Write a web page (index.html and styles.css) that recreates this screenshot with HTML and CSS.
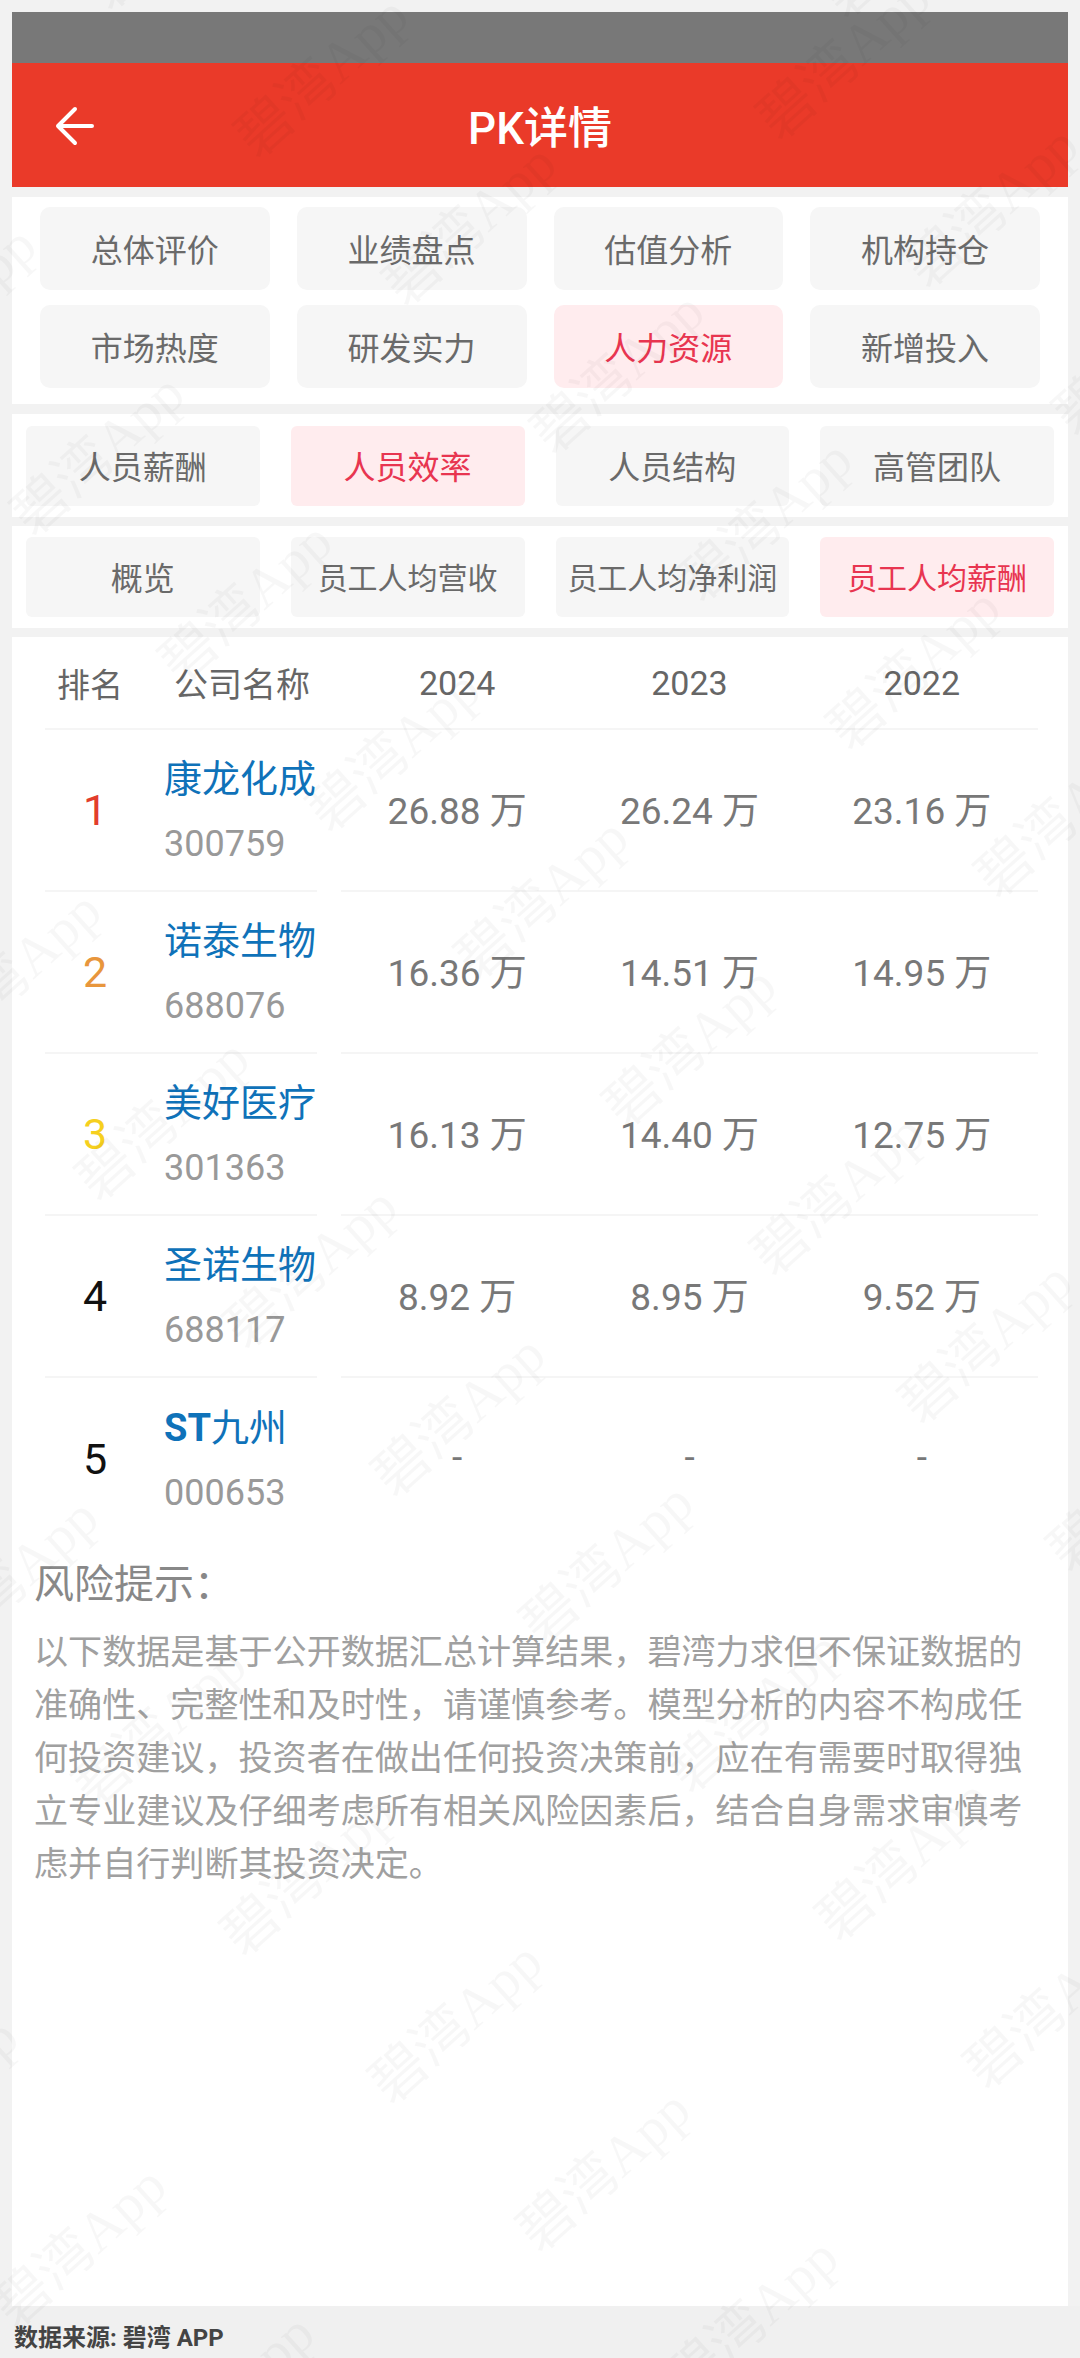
FILE: index.html
```html
<!DOCTYPE html>
<html lang="zh-CN">
<head>
  <meta charset="UTF-8">
  <meta name="viewport" content="width=device-width, initial-scale=1.0">
  <title>PK详情</title>
  <link rel="stylesheet" href="styles.css">
</head>
<body>

  <div class="frame">
    <div class="statusbar"></div>

    <div class="navbar">
      <svg class="back-icon" viewBox="0 0 40 40" width="40" height="40">
        <path d="M3 20H37M20 3L3 20L20 37" fill="none" stroke="#fff" stroke-width="4" stroke-linecap="round" stroke-linejoin="round"/>
      </svg>
      <div class="navbar-title">PK详情</div>
    </div>

    <div class="panel panel-main">
      <div class="tab">总体评价</div>
      <div class="tab">业绩盘点</div>
      <div class="tab">估值分析</div>
      <div class="tab">机构持仓</div>
      <div class="tab">市场热度</div>
      <div class="tab">研发实力</div>
      <div class="tab active">人力资源</div>
      <div class="tab">新增投入</div>
    </div>

    <div class="panel panel-sub">
      <div class="tab">人员薪酬</div>
      <div class="tab active">人员效率</div>
      <div class="tab">人员结构</div>
      <div class="tab">高管团队</div>
    </div>

    <div class="panel panel-sub panel-last">
      <div class="tab">概览</div>
      <div class="tab tab-small">员工人均营收</div>
      <div class="tab tab-small">员工人均净利润</div>
      <div class="tab tab-small active">员工人均薪酬</div>
    </div>

    <div class="content">
      <div class="rank-table">
        <div class="table-head">
          <div class="head-rank">排名</div>
          <div class="head-name">公司名称</div>
          <div class="cols">
            <div>2024</div>
            <div>2023</div>
            <div>2022</div>
          </div>
        </div>

        <div class="row">
          <div class="row-left">
            <div class="rank rank-1">1</div>
            <div class="company">
              <div class="company-name">康龙化成</div>
              <div class="company-code">300759</div>
            </div>
          </div>
          <div class="cols cols-line">
            <div>26.88 万</div>
            <div>26.24 万</div>
            <div>23.16 万</div>
          </div>
        </div>

        <div class="row">
          <div class="row-left">
            <div class="rank rank-2">2</div>
            <div class="company">
              <div class="company-name">诺泰生物</div>
              <div class="company-code">688076</div>
            </div>
          </div>
          <div class="cols cols-line">
            <div>16.36 万</div>
            <div>14.51 万</div>
            <div>14.95 万</div>
          </div>
        </div>

        <div class="row">
          <div class="row-left">
            <div class="rank rank-3">3</div>
            <div class="company">
              <div class="company-name">美好医疗</div>
              <div class="company-code">301363</div>
            </div>
          </div>
          <div class="cols cols-line">
            <div>16.13 万</div>
            <div>14.40 万</div>
            <div>12.75 万</div>
          </div>
        </div>

        <div class="row">
          <div class="row-left">
            <div class="rank">4</div>
            <div class="company">
              <div class="company-name">圣诺生物</div>
              <div class="company-code">688117</div>
            </div>
          </div>
          <div class="cols cols-line">
            <div>8.92 万</div>
            <div>8.95 万</div>
            <div>9.52 万</div>
          </div>
        </div>

        <div class="row row-last">
          <div class="row-left">
            <div class="rank">5</div>
            <div class="company">
              <div class="company-name"><strong>ST</strong>九州</div>
              <div class="company-code">000653</div>
            </div>
          </div>
          <div class="cols cols-line">
            <div>-</div>
            <div>-</div>
            <div>-</div>
          </div>
        </div>
      </div>

      <div class="risk">
        <div class="risk-title">风险提示：</div>
        <p class="risk-text">以下数据是基于公开数据汇总计算结果，碧湾力求但不保证数据的准确性、完整性和及时性，请谨慎参考。模型分析的内容不构成任何投资建议，投资者在做出任何投资决策前，应在有需要时取得独立专业建议及仔细考虑所有相关风险因素后，结合自身需求审慎考虑并自行判断其投资决定。</p>
      </div>
    </div>
  </div>

  <div class="footer">数据来源: 碧湾 APP</div>

  <!-- watermark lies over the whole page -->
  <svg class="watermark" viewBox="0 0 1080 2358" width="1080" height="2358">
    <g transform="translate(25 0)">
      <text transform="translate(820 20) rotate(-42)">碧湾App</text>
      <text transform="translate(754 142) rotate(-42)">碧湾App</text>
      <text transform="translate(902 290) rotate(-42)">碧湾App</text>
      <text transform="translate(1050 438) rotate(-42)">碧湾App</text>

      <text transform="translate(84 12) rotate(-42)">碧湾App</text>
      <text transform="translate(232 160) rotate(-42)">碧湾App</text>
      <text transform="translate(380 308) rotate(-42)">碧湾App</text>
      <text transform="translate(528 456) rotate(-42)">碧湾App</text>
      <text transform="translate(676 604) rotate(-42)">碧湾App</text>
      <text transform="translate(824 752) rotate(-42)">碧湾App</text>
      <text transform="translate(972 900) rotate(-42)">碧湾App</text>

      <text transform="translate(-140 390) rotate(-42)">碧湾App</text>
      <text transform="translate(8 538) rotate(-42)">碧湾App</text>
      <text transform="translate(156 686) rotate(-42)">碧湾App</text>
      <text transform="translate(304 834) rotate(-42)">碧湾App</text>
      <text transform="translate(452 982) rotate(-42)">碧湾App</text>
      <text transform="translate(600 1130) rotate(-42)">碧湾App</text>
      <text transform="translate(748 1278) rotate(-42)">碧湾App</text>
      <text transform="translate(896 1426) rotate(-42)">碧湾App</text>
      <text transform="translate(1044 1574) rotate(-42)">碧湾App</text>

      <text transform="translate(-75 1055) rotate(-42)">碧湾App</text>
      <text transform="translate(73 1203) rotate(-42)">碧湾App</text>
      <text transform="translate(221 1351) rotate(-42)">碧湾App</text>
      <text transform="translate(369 1499) rotate(-42)">碧湾App</text>
      <text transform="translate(517 1647) rotate(-42)">碧湾App</text>
      <text transform="translate(665 1795) rotate(-42)">碧湾App</text>
      <text transform="translate(813 1943) rotate(-42)">碧湾App</text>
      <text transform="translate(961 2091) rotate(-42)">碧湾App</text>

      <text transform="translate(-78 1662) rotate(-42)">碧湾App</text>
      <text transform="translate(70 1810) rotate(-42)">碧湾App</text>
      <text transform="translate(218 1958) rotate(-42)">碧湾App</text>
      <text transform="translate(366 2106) rotate(-42)">碧湾App</text>
      <text transform="translate(514 2254) rotate(-42)">碧湾App</text>
      <text transform="translate(662 2402) rotate(-42)">碧湾App</text>

      <text transform="translate(-158 2182) rotate(-42)">碧湾App</text>
      <text transform="translate(-10 2330) rotate(-42)">碧湾App</text>
      <text transform="translate(138 2478) rotate(-42)">碧湾App</text>
    </g>
  </svg>

</body>
</html>
```

FILE: styles.css
```css
html,
body {
  margin: 0;
  padding: 0;
}

body {
  position: relative;
  width: 1080px;
  height: 2358px;
  overflow: hidden;
  background-color: #f2f2f2;
  font-family: Roboto, "Noto Sans CJK SC", sans-serif;
  color: #777;
}

.frame {
  padding: 12px 12px 0;
  height: 2306px;
  box-sizing: border-box;
  display: flex;
  flex-direction: column;
}

.statusbar {
  height: 51px;
  background-color: #787878;
}

.navbar {
  position: relative;
  height: 124px;
  margin-bottom: 10px;
  background-color: #ea3a29;
  display: flex;
  align-items: center;
  justify-content: center;
}

.back-icon {
  position: absolute;
  left: 43px;
  top: 43px;
}

.navbar-title {
  color: white;
  font-size: 44px;
  font-weight: 500;
}

.panel {
  background-color: white;
  display: grid;
  grid-template-columns: repeat(4, 1fr);
  margin-bottom: 9px;
}

.panel-main {
  padding: 10px 28px 16px;
  grid-auto-rows: 83px;
  gap: 15px 27px;
  margin-bottom: 10px;
}

.panel-sub {
  padding: 12px 14px 11px;
  grid-auto-rows: 80px;
  column-gap: 31px;
}

.panel-last {
  padding-top: 11px;
}

.tab {
  background-color: #f6f6f6;
  border-radius: 10px;
  color: #6a6a6a;
  font-size: 32px;
  padding-bottom: 2px;
  box-sizing: border-box;
  display: flex;
  align-items: center;
  justify-content: center;
  white-space: nowrap;
}

.panel-sub .tab {
  border-radius: 6px;
}

.tab-small {
  font-size: 30px;
}

.tab.active {
  background-color: #ffecee;
  color: #e83550;
}

.content {
  flex: 1;
  background-color: white;
}

.rank-table {
  padding: 0 30px 0 33px;
}

.table-head {
  height: 91px;
  border-bottom: 2px solid #f5f5f5;
  display: flex;
  align-items: center;
  font-size: 33px;
  color: #666;
}

.head-rank {
  width: 90px;
  text-align: center;
}

.head-name {
  width: 206px;
  padding-left: 39px;
  box-sizing: border-box;
  white-space: nowrap;
  font-size: 34px;
}

.cols {
  flex: 1;
  display: grid;
  grid-template-columns: repeat(3, 1fr);
  align-items: center;
  text-align: center;
  font-size: 34px;
}

.row {
  height: 162px;
  display: flex;
}

.row-left {
  width: 272px;
  margin-right: 24px;
  box-sizing: border-box;
  border-bottom: 2px solid #f5f5f5;
  display: flex;
  align-items: center;
}

.cols-line {
  border-bottom: 2px solid #f5f5f5;
  padding-bottom: 4px;
  font-size: 37px;
  color: #787878;
}

.row-last .row-left,
.row-last .cols-line {
  border-bottom: none;
}

.rank {
  width: 100px;
  text-align: center;
  font-size: 43px;
  color: #111;
}

.rank-1 {
  color: #e23d2c;
}

.rank-2 {
  color: #e8963c;
}

.rank-3 {
  color: #f6d01e;
}

.company {
  padding: 4px 0 0 19px;
  white-space: nowrap;
}

.company-name {
  font-size: 38px;
  line-height: 65px;
  color: #0f72b9;
}

.company-code {
  font-size: 36px;
  line-height: 65px;
  color: #999;
}

.risk {
  padding: 19px 0 0 22px;
}

.risk-title {
  font-size: 40px;
  line-height: 52px;
  color: #888;
}

.risk-text {
  margin: 15px 0 0;
  width: 992px;
  font-size: 34.1px;
  line-height: 53px;
  color: #a0a0a0;
}

.footer {
  height: 52px;
  padding-left: 14px;
  background-color: #f0f0f0;
  font-size: 24px;
  font-weight: 700;
  line-height: 64px;
  color: #444;
}

.watermark {
  position: absolute;
  left: 0;
  top: 0;
  pointer-events: none;
}

.watermark text {
  font-family: "Liberation Serif", "Noto Sans CJK SC", serif;
  font-size: 56px;
  fill: rgba(0, 0, 0, 0.03);
}
```
